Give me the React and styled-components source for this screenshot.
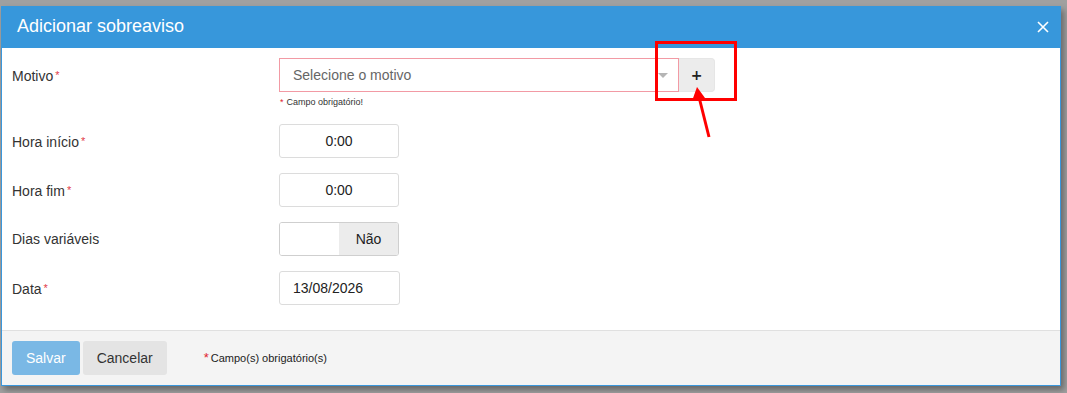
import React from "react";
import styled, { createGlobalStyle } from "styled-components";

const Global = createGlobalStyle`
  html, body { margin: 0; padding: 0; }
  body {
    background: #a0a0a0;
    font-family: "Liberation Sans", Arial, sans-serif;
    width: 1067px;
    height: 393px;
    overflow: hidden;
  }
`;

const Page = styled.div`
  padding: 6px 0 0 1px;
`;

const Modal = styled.div`
  position: relative;
  width: 1058px;
  border: 1px solid #3a97dc;
  border-top: none;
  background: #fff;
  box-shadow: 3px 4px 6px rgba(0, 0, 0, 0.35);
`;

const Header = styled.div`
  height: 42px;
  background: #3797db;
  color: #fff;
  display: flex;
  align-items: center;
  justify-content: space-between;
  padding: 0 10px 0 16px;
  margin: 0 -1px;
`;

const Title = styled.h4`
  margin: 0;
  font-size: 18px;
  font-weight: normal;
  padding-bottom: 1px;
`;

const Close = styled.button`
  background: none;
  border: none;
  padding: 0;
  width: 16px;
  height: 16px;
  display: flex;
  align-items: center;
  justify-content: center;
  cursor: pointer;
`;

const Body = styled.div`
  padding: 10px 10px 25px 10px;
  display: flex;
  flex-direction: column;
  gap: 15px;
`;

const Row = styled.div`
  display: flex;
  align-items: flex-start;
  margin-bottom: ${(p) => (p.$extra ? p.$extra : 0)}px;
`;

const Label = styled.label`
  width: 267px;
  flex-shrink: 0;
  font-size: 14px;
  color: #333;
  line-height: 34px;
  height: 34px;
`;

const Req = styled.span`
  color: #e23c4a;
  font-size: 11px;
  margin-left: 2px;
  vertical-align: 2px;
`;

const Field = styled.div`
  display: flex;
  flex-direction: column;
`;

const Group = styled.div`
  display: flex;
`;

const SelectBox = styled.div`
  width: 400px;
  height: 34px;
  box-sizing: border-box;
  border: 1px solid #f29aa4;
  display: flex;
  align-items: center;
  justify-content: space-between;
  padding: 0 10px 0 13px;
  font-size: 14px;
  color: #666;
`;

const Caret = styled.span`
  width: 0;
  height: 0;
  border-left: 5px solid transparent;
  border-right: 5px solid transparent;
  border-top: 5px solid #b5b5b5;
  margin-top: 1px;
`;

const AddButton = styled.button`
  width: 36px;
  height: 34px;
  border: 1px solid #e6e6e6;
  border-left: none;
  background: #ececec;
  border-radius: 0 4px 4px 0;
  font-family: "DejaVu Sans", sans-serif;
  font-size: 14px;
  font-weight: bold;
  color: #222;
  padding: 0;
  display: flex;
  align-items: center;
  justify-content: center;
`;

const ErrorText = styled.div`
  font-size: 9px;
  color: #333;
  margin-top: 5px;
  padding-left: 1px;
`;

const ErrStar = styled.span`
  color: #e0222e;
  margin-right: 3px;
`;

const Input = styled.div`
  width: ${(p) => p.$w || 120}px;
  height: 34px;
  box-sizing: border-box;
  border: 1px solid #dcdcdc;
  border-radius: 3px;
  font-size: 14px;
  color: #222;
  display: flex;
  align-items: center;
  justify-content: ${(p) => (p.$left ? "flex-start" : "center")};
  padding-left: ${(p) => (p.$left ? "13px" : "0")};
`;

const Toggle = styled.div`
  width: 120px;
  height: 34px;
  box-sizing: border-box;
  border: 1px solid #cfcfcf;
  border-radius: 3px;
  display: flex;
  overflow: hidden;
`;

const ToggleOff = styled.div`
  width: 59px;
  background: #fff;
`;

const ToggleOn = styled.div`
  flex: 1;
  background: #ececec;
  font-size: 14px;
  color: #222;
  display: flex;
  align-items: center;
  justify-content: center;
`;

const Footer = styled.div`
  border-top: 1px solid #e0e0e0;
  background: #f4f4f4;
  padding: 10px 10px 10px 10px;
  display: flex;
  align-items: center;
`;

const Btn = styled.button`
  height: 34px;
  padding: 0 ${(p) => p.$px}px;
  border: none;
  border-radius: 3px;
  font-family: "Liberation Sans", Arial, sans-serif;
  font-size: 14px;
  background: ${(p) => p.$bg};
  color: ${(p) => p.$color};
  margin-right: 3px;
`;

const Note = styled.div`
  font-size: 11px;
  color: #222;
  margin-left: 34px;
  padding-bottom: 2px;
`;

const NoteStar = styled.span`
  color: #e0222e;
  font-size: 13px;
  margin-right: 2px;
`;

const Highlight = styled.div`
  position: absolute;
  left: 653px;
  top: 35px;
  width: 76px;
  height: 54px;
  border: 3px solid #f00;
  pointer-events: none;
`;

const ArrowSvg = styled.svg`
  position: absolute;
  left: 688px;
  top: 79px;
  pointer-events: none;
`;

export default function App() {
  return (
    <>
      <Global />
      <Page>
        <Modal>
          <Header>
            <Title>Adicionar sobreaviso</Title>
            <Close aria-label="Fechar">
              <svg width="12" height="12" viewBox="0 0 12 12">
                <path d="M1 1 L11 11 M11 1 L1 11" stroke="#fff" strokeWidth="1.6" />
              </svg>
            </Close>
          </Header>
          <Body>
            <Row $extra={2}>
              <Label>
                Motivo<Req>*</Req>
              </Label>
              <Field>
                <Group>
                  <SelectBox>
                    <span>Selecione o motivo</span>
                    <Caret />
                  </SelectBox>
                  <AddButton>+</AddButton>
                </Group>
                <ErrorText>
                  <ErrStar>*</ErrStar>Campo obrigatório!
                </ErrorText>
              </Field>
            </Row>
            <Row>
              <Label>
                Hora início<Req>*</Req>
              </Label>
              <Input>0:00</Input>
            </Row>
            <Row>
              <Label>
                Hora fim<Req>*</Req>
              </Label>
              <Input>0:00</Input>
            </Row>
            <Row>
              <Label>Dias variáveis</Label>
              <Toggle>
                <ToggleOff />
                <ToggleOn>Não</ToggleOn>
              </Toggle>
            </Row>
            <Row>
              <Label>
                Data<Req>*</Req>
              </Label>
              <Input $w={121} $left>
                13/08/2026
              </Input>
            </Row>
          </Body>
          <Footer>
            <Btn $bg="#7ab8e5" $color="#fff" $px={14}>
              Salvar
            </Btn>
            <Btn $bg="#e4e4e4" $color="#333" $px={14}>
              Cancelar
            </Btn>
            <Note>
              <NoteStar>*</NoteStar>Campo(s) obrigatório(s)
            </Note>
          </Footer>
          <Highlight />
          <ArrowSvg width="24" height="60" viewBox="0 0 24 60">
            <path d="M19 52 L9 12" stroke="#f00" strokeWidth="3" fill="none" />
            <path d="M7 2 L2 16 L15 13 Z" fill="#f00" />
          </ArrowSvg>
        </Modal>
      </Page>
    </>
  );
}
